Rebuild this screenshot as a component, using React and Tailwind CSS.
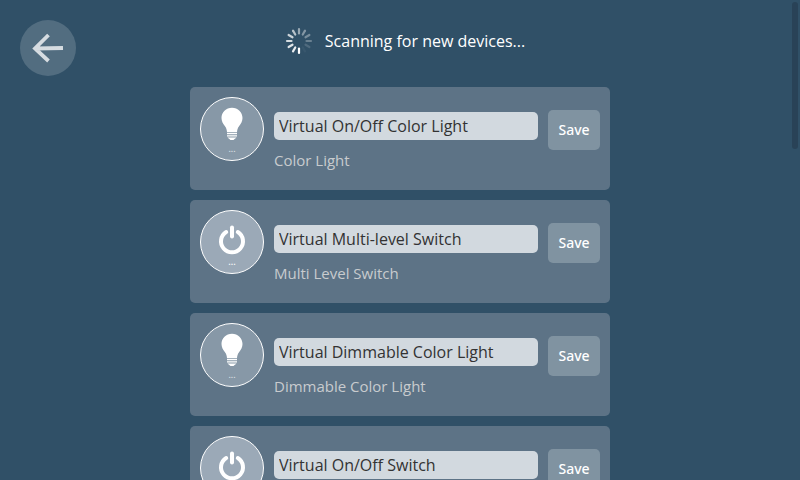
const devices = [
  { id: 'color', name: 'Virtual On/Off Color Light', type: 'Color Light', icon: 'bulb' },
  { id: 'multi', name: 'Virtual Multi-level Switch', type: 'Multi Level Switch', icon: 'power' },
  { id: 'dimmable', name: 'Virtual Dimmable Color Light', type: 'Dimmable Color Light', icon: 'bulb' },
  { id: 'switch', name: 'Virtual On/Off Switch', type: 'On/Off Switch', icon: 'power' },
];

const spokes = [0.5, 0.4, 0.35, 0.28, 0.15, 0.04, 1, 0.9, 0.85, 0.8, 0.75, 0.65];

function Spinner() {
  return (
    <svg className="size-8 shrink-0" viewBox="-16 -16 32 32" aria-hidden="true">
      {spokes.map((opacity, i) => (
        <line
          key={i}
          x1="0"
          y1="-7.5"
          x2="0"
          y2="-12"
          stroke="#fff"
          strokeWidth="2.2"
          strokeLinecap="round"
          opacity={opacity}
          transform={`rotate(${i * 30})`}
        />
      ))}
    </svg>
  );
}

function BulbIcon() {
  return (
    <svg className="size-full" viewBox="1 1 62 62" fill="#fff" aria-hidden="true">
      <path d="M32 10.800c-5.900 0-10.500 4.500-10.500 10.200 0 3.400 1.600 5.700 3.300 7.900 1.700 2.100 2.100 4.200 2.200 6.300h10c.1-2.100.5-4.200 2.200-6.300 1.700-2.200 3.300-4.500 3.300-7.900 0-5.700-4.600-10.200-10.500-10.200z" />
      <path d="M27 36h10v1.200H27zM27 38.200h10v1.400H27zM27.500 40.500h9l-1.500 1.300c-.8.400-1 1.200-1.500 1.200h-3c-.5 0-.7-.8-1.500-1.200z" />
    </svg>
  );
}

function PowerIcon() {
  return (
    <svg className="size-full" viewBox="1 1 62 62" fill="none" stroke="#fff" strokeWidth="4" strokeLinecap="round" aria-hidden="true">
      <path d="M32 17.500V26.500" />
      <path d="M26.200 22a11 11 0 1 0 11.600 0" />
    </svg>
  );
}

function DeviceCard({ device }) {
  const isBulb = device.icon === 'bulb';
  return (
    <li className="flex min-h-[103px] items-start gap-[10px] rounded-[5px] bg-[#5d7386] p-[10px]">
      <div
        className={`relative size-16 shrink-0 overflow-hidden rounded-full border border-white ${isBulb ? 'bg-[#8798a7]' : 'bg-[#9ba9b7]'}`}
      >
        {isBulb ? <BulbIcon /> : <PowerIcon />}
        <span className={`absolute inset-x-0 bottom-[6px] text-center text-[9px] leading-[10px] ${isBulb ? 'text-white/80' : 'font-semibold text-white'}`}>
          ...
        </span>
      </div>
      <div className="min-w-0 flex-1 pt-[15px]">
        <input
          type="text"
          aria-label="Device name"
          defaultValue={device.name}
          className="block h-7 w-full rounded-[5px] bg-[#d2d9df] px-[5px] text-base text-[#333]"
        />
        <p className="mt-[10px] text-[15px] leading-5 text-[#c8cbce]">{device.type}</p>
      </div>
      <button type="button" className="mt-[13px] h-10 w-[52px] shrink-0 rounded-[5px] bg-[#8093a1] font-['Noto_Sans',sans-serif] text-sm font-medium text-white">
        Save
      </button>
    </li>
  );
}

export default function App() {
  return (
    <div className="relative h-screen overflow-x-hidden overflow-y-auto bg-[#305067] font-['Open_Sans',sans-serif] text-white [scrollbar-width:none]">
      <button
        type="button"
        aria-label="Back"
        className="absolute top-5 left-5 size-14 rounded-full bg-[#526d80]"
      >
        <svg className="size-full" viewBox="0 0 56 56" fill="none" stroke="#d6dce1" strokeWidth="3.8" aria-hidden="true">
          <path d="M28.500 15 15 28.500 28.500 41M15.500 28.500 43 28" />
        </svg>
      </button>
      <header className="flex items-center justify-center gap-[10px] pt-[25px] pl-2 text-base">
        <Spinner />
        <span>Scanning for new devices...</span>
      </header>
      <ul className="mx-auto mt-[30px] flex max-w-[420px] flex-col gap-[10px]">
        {devices.map((device) => (
          <DeviceCard key={device.id} device={device} />
        ))}
      </ul>
      <div className="fixed top-[2px] right-[2px] h-[147px] w-[6px] rounded-full bg-[#294257]" />
    </div>
  );
}
